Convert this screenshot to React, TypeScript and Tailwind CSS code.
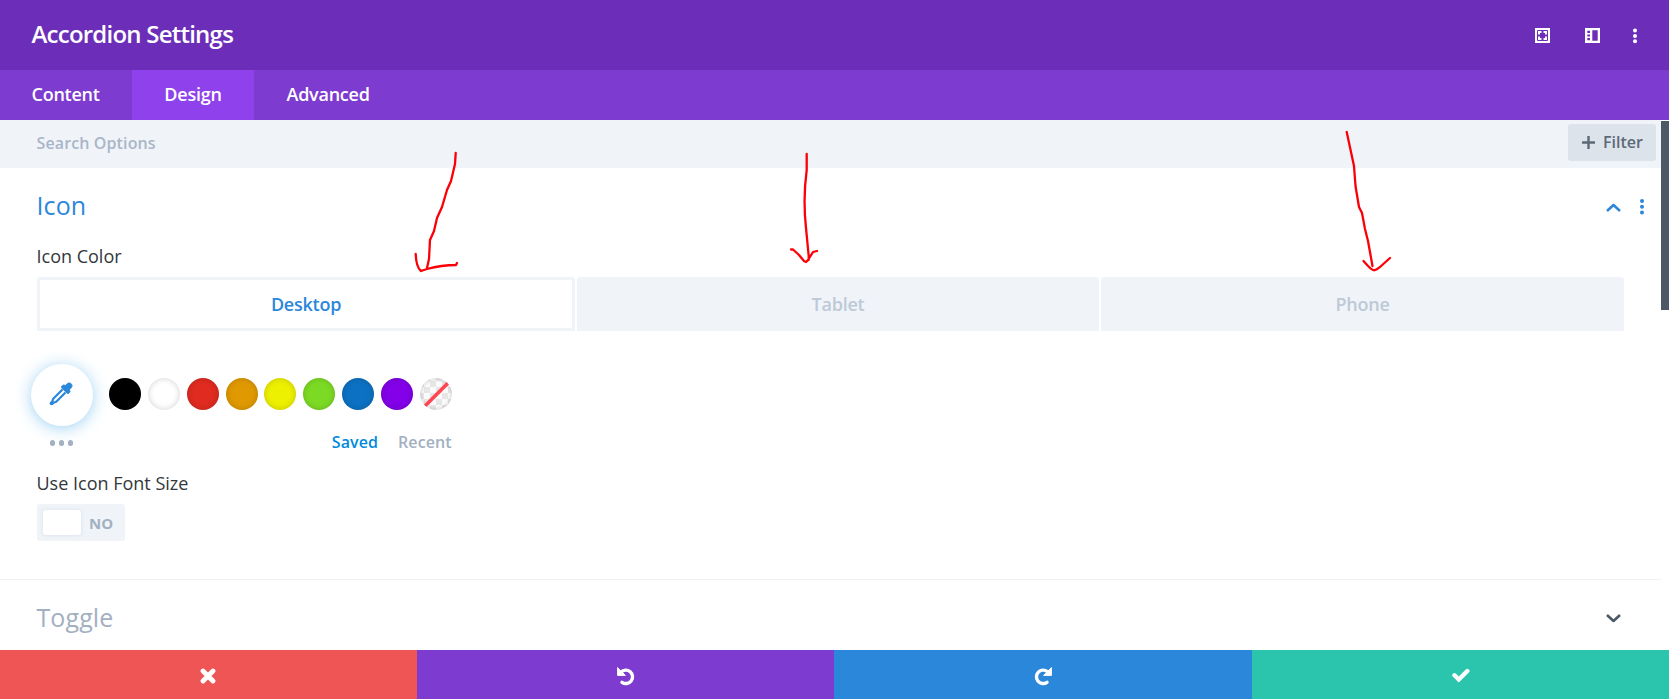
import React from "react";

const swatches = [
  "bg-black",
  "bg-white",
  "bg-[#e02b20]",
  "bg-[#e09900]",
  "bg-[#edf000]",
  "bg-[#7cda24]",
  "bg-[#0c71c3]",
  "bg-[#8300e9]",
];

function Header() {
  return (
    <header className="flex h-[70px] shrink-0 items-center justify-between bg-[#6c2eb9] pl-[31.500px] pr-[31px] text-white">
      <h1 className="pb-[2px] text-[24px] leading-none font-semibold tracking-[-0.770px]">Accordion Settings</h1>
      <div className="flex items-center pt-px">
        <svg className="mr-[35px] size-[15px]" viewBox="0 0 15 15">
          <path fill="#fff" d="M0 0H15V15H0Z" />
          <path fill="none" stroke="#6c2eb9" strokeWidth="1" d="M2.500 2.500H12.500V12.500H2.500Z" />
          <path fill="#6c2eb9" d="M5 5H10V10H5Z M6.500 3H8.500V12H6.500Z M3 6.500H12V8.500H3Z" />
        </svg>
        <svg className="mr-[32px] size-[15px]" viewBox="0 0 15 15">
          <path fill="#fff" fillRule="evenodd" d="M0 0H15V15H0Z M7.300 2.300V12.700H12.700V2.300Z M2.300 2.800V5H5V2.800Z M2.300 6.400V8.600H5V6.400Z M2.300 10V12.200H5V10Z" />
        </svg>
        <svg className="h-[16px] w-[6px]" viewBox="0 0 6 16" fill="#fff">
          <circle cx="3" cy="2.500" r="2" />
          <circle cx="3" cy="8" r="2" />
          <circle cx="3" cy="13.300" r="2" />
        </svg>
      </div>
    </header>
  );
}

function MainTabs() {
  return (
    <nav className="flex h-[50px] shrink-0 bg-[#7e3bd0] text-[18px] font-semibold tracking-[-0.25px] text-white">
      <button className="w-[132px] pb-px pl-[31.500px] text-left">Content</button>
      <button className="w-[122px] bg-[#8f42ec] pb-px">Design</button>
      <button className="pb-px pl-[32.500px]">Advanced</button>
    </nav>
  );
}

function SearchBar() {
  return (
    <div className="flex h-[48px] shrink-0 items-start justify-between bg-[#f0f4f9] pt-1 pr-[5px] pl-[36.500px]">
      <span className="mt-[6px] text-[16px] leading-[26px] font-semibold tracking-[0.120px] text-[#a9b6c8]">Search Options</span>
      <button className="flex h-[37px] w-[88px] items-center rounded-[3px] bg-[#dce3eb] pb-px pl-[14px] text-[16px] font-semibold text-[#5c6978]">
        <svg className="mt-px mr-[8px] size-[13px]" viewBox="0 0 13 13" stroke="#5c6978" strokeWidth="2.400">
          <path d="M6.500 0V13M0 6.500H13" />
        </svg>
        Filter
      </button>
    </div>
  );
}

function DeviceTabs() {
  return (
    <div className="mx-[37px] flex h-[54px] gap-[2px] text-[18px] font-semibold tracking-[-0.25px] text-[#bdc9d7]">
      <button className="w-[538px] rounded-t-[3px] border-[3px] border-[#f0f4f9] bg-white text-[#2b87da]">Desktop</button>
      <button className="w-[522px] rounded-t-[3px] bg-[#f0f4f9]">Tablet</button>
      <button className="w-[523px] rounded-t-[3px] bg-[#f0f4f9]">Phone</button>
    </div>
  );
}

function ColorPicker() {
  return (
    <div className="ml-[31px] flex pt-[33px]">
      <div className="flex w-[62px] flex-col items-center">
        <button className="flex size-[62px] items-center justify-center rounded-full bg-white shadow-[0_2px_16px_rgba(43,155,230,0.45)]">
          <svg className="-mt-[2px] mr-[2px] size-[24px]" viewBox="0 0 24 24">
            <path d="M13.500 7.500L4.200 16.800L2.500 21.500L7.200 19.800L16.500 10.500" fill="none" stroke="#2b87da" strokeWidth="2.200" strokeLinejoin="round" />
            <path d="M12.500 4.500L14.500 3L16.500 3.500C18 1.500 20 0 22.200 1.800C24 4 22.500 6 20.500 7.500L21 9.500L19.500 11.500L17.800 11L13 6.200Z" fill="#2b87da" stroke="#2b87da" strokeWidth="1" strokeLinejoin="round" />
            <circle cx="2.700" cy="21.300" r="2" fill="#2b87da" />
          </svg>
        </button>
        <div className="mt-[14px] mr-px flex gap-[3.500px]">
          <i className="size-[5.500px] rounded-full bg-[#a2b0c1]" />
          <i className="size-[5.500px] rounded-full bg-[#a2b0c1]" />
          <i className="size-[5.500px] rounded-full bg-[#a2b0c1]" />
        </div>
      </div>
      <div className="ml-[16px] pt-[14px]">
        <div className="flex gap-[6.850px]">
          {swatches.map((color) => (
            <button key={color} className={`size-8 rounded-full shadow-[inset_0_0_6px_rgba(0,0,0,0.18)] ${color}`} />
          ))}
          <button className="size-8 overflow-hidden rounded-full">
            <svg className="size-8" viewBox="0 0 32 32">
              <defs>
                <pattern id="checks" x="4" y="-3" width="12" height="12" patternUnits="userSpaceOnUse">
                  <rect width="12" height="12" fill="#fafafa" />
                  <path d="M0 0H6V6H0ZM6 6H12V12H6Z" fill="#e6e6e6" />
                </pattern>
                <radialGradient id="rim">
                  <stop offset="75%" stopColor="#000" stopOpacity="0" />
                  <stop offset="100%" stopColor="#000" stopOpacity=".1" />
                </radialGradient>
              </defs>
              <rect width="32" height="32" fill="url(#checks)" />
              <circle cx="16" cy="16" r="16" fill="url(#rim)" />
              <path d="M5 28L28 5" stroke="#ff4550" strokeWidth="3.500" />
            </svg>
          </button>
        </div>
        <div className="mt-[20px] flex justify-end gap-[20px] text-[16px] leading-[24px] font-semibold tracking-[0.100px] text-[#a2b0c1]">
          <span className="text-[#008bdd]">Saved</span>
          <span>Recent</span>
        </div>
      </div>
    </div>
  );
}

function IconSection() {
  return (
    <section className="h-[412px] shrink-0 border-b border-[#f1f2f4]">
      <div className="flex items-center justify-between pt-[19px] pr-[16px] pl-[36.500px]">
        <h2 className="-mt-px mb-px text-[25px] leading-[38px] tracking-[0.100px] text-[#2b87da]">Icon</h2>
        <div className="flex items-center pt-[2px]">
          <svg className="mr-[19px] h-[9px] w-[15px]" viewBox="0 0 15 9" fill="none" stroke="#2b87da" strokeWidth="2.500">
            <path d="M1 8L7.500 2L14 8" strokeLinejoin="round" />
          </svg>
          <svg className="h-[16px] w-[5px]" viewBox="0 0 5 16" fill="#2b87da">
            <circle cx="2" cy="2" r="2" />
            <circle cx="2" cy="7.700" r="2" />
            <circle cx="2" cy="13.400" r="2" />
          </svg>
        </div>
      </div>
      <h3 className="mt-[18px] mb-[8px] pl-[36.500px] text-[18px] leading-[26px] font-medium text-[#32373c]">Icon Color</h3>
      <DeviceTabs />
      <ColorPicker />
      <h3 className="mt-[16px] pl-[36.500px] text-[18px] leading-[26px] font-medium text-[#32373c]">Use Icon Font Size</h3>
      <button className="mt-[8px] ml-[37px] flex h-[37px] w-[88px] items-center rounded-[3px] bg-[#f0f4f9] pl-[6px] text-[15px] font-bold text-[#a2b0c1]">
        <span className="mr-2 h-[25px] w-[38px] rounded-[3px] bg-white shadow-[0_0_4px_rgba(50,70,100,0.12)]" />
        <span className="pt-px">NO</span>
      </button>
    </section>
  );
}

function ToggleSection() {
  return (
    <section className="flex grow items-center justify-between pr-[40px] pb-px pl-[36.500px]">
      <h2 className="pt-[4px] text-[25px] leading-[38px] tracking-[0.100px] text-[#a2b0c1]">Toggle</h2>
      <svg className="mt-[7px] h-[9px] w-[15px]" viewBox="0 0 15 9" fill="none" stroke="#4c5866" strokeWidth="2.600">
        <path d="M1 1L7.500 7L14 1" strokeLinejoin="round" />
      </svg>
    </section>
  );
}

function TurnArrow() {
  return (
    <>
      <path d="M4 5.200A6.700 6.700 0 1 1 5 15.300" fill="none" stroke="#fff" strokeWidth="3.400" strokeLinecap="round" />
      <path d="M0.600 0.600V8.400H8.400Z" fill="#fff" stroke="#fff" strokeWidth="1" strokeLinejoin="round" />
    </>
  );
}

function Footer() {
  return (
    <footer className="flex h-[49px] shrink-0 text-white">
      <button className="flex w-[417px] items-center justify-center bg-[#ef5555]">
        <svg className="mt-[2px] mr-[2px] size-[16px]" viewBox="0 0 16 16" stroke="#fff" strokeWidth="4.800" strokeLinecap="round">
          <path d="M3 3L13 13M13 3L3 13" />
        </svg>
      </button>
      <button className="flex w-[417px] items-center justify-center bg-[#7e3bd0]">
        <svg className="mt-[3px] ml-[2px] size-[19px]" viewBox="0 0 19 19">
          <TurnArrow />
        </svg>
      </button>
      <button className="flex w-[418px] items-center justify-center bg-[#2b87da]">
        <svg className="mt-[3px] mr-[2px] size-[19px] -scale-x-100" viewBox="0 0 19 19">
          <TurnArrow />
        </svg>
      </button>
      <button className="flex w-[417px] items-center justify-center bg-[#2bc4ac]">
        <svg className="mt-[2px] h-[15px] w-[18px]" viewBox="0 0 18 15" fill="none" stroke="#fff" strokeWidth="4.400" strokeLinecap="round">
          <path d="M2.500 7.300L6.800 11.500L15.300 3" />
        </svg>
      </button>
    </footer>
  );
}

function Arrows() {
  return (
    <svg
      className="pointer-events-none absolute top-0 left-0 h-[699px] w-[1669px]"
      viewBox="0 0 1669 699"
      fill="none"
      stroke="#fb0007"
      strokeWidth="2.300"
      strokeLinecap="round"
      strokeLinejoin="round"
    >
      <path d="M455.700 153L455 164L451 181L447 190L442 207L437 218L434 231L430 240L429 259L427 268M415.700 254C416 262 417 268 421 271L427 269C438 266 445 265 456 265L457 263" />
      <path d="M806.700 154V170C804 190 804 210 806 228L808.700 256V260M791 249.500H793L799 255L804 261L806 262L808 260L813 252L817 251" />
      <path d="M1346.700 132L1354 166L1355.500 186L1359 207L1362 213L1365 229L1368 241L1372.500 266M1363.500 261L1368 266C1374 272 1375 271 1380 267L1390 258" />
    </svg>
  );
}

export default function App() {
  return (
    <div className="relative flex h-[699px] w-[1669px] flex-col overflow-hidden bg-white font-['Open_Sans',sans-serif]">
      <Header />
      <MainTabs />
      <div className="flex min-h-0 grow">
        <main className="flex w-[1661px] flex-col">
          <SearchBar />
          <IconSection />
          <ToggleSection />
        </main>
        <div className="w-2 bg-white pt-px">
          <div className="h-[189px] bg-[#4c5866]" />
        </div>
      </div>
      <Footer />
      <Arrows />
    </div>
  );
}
